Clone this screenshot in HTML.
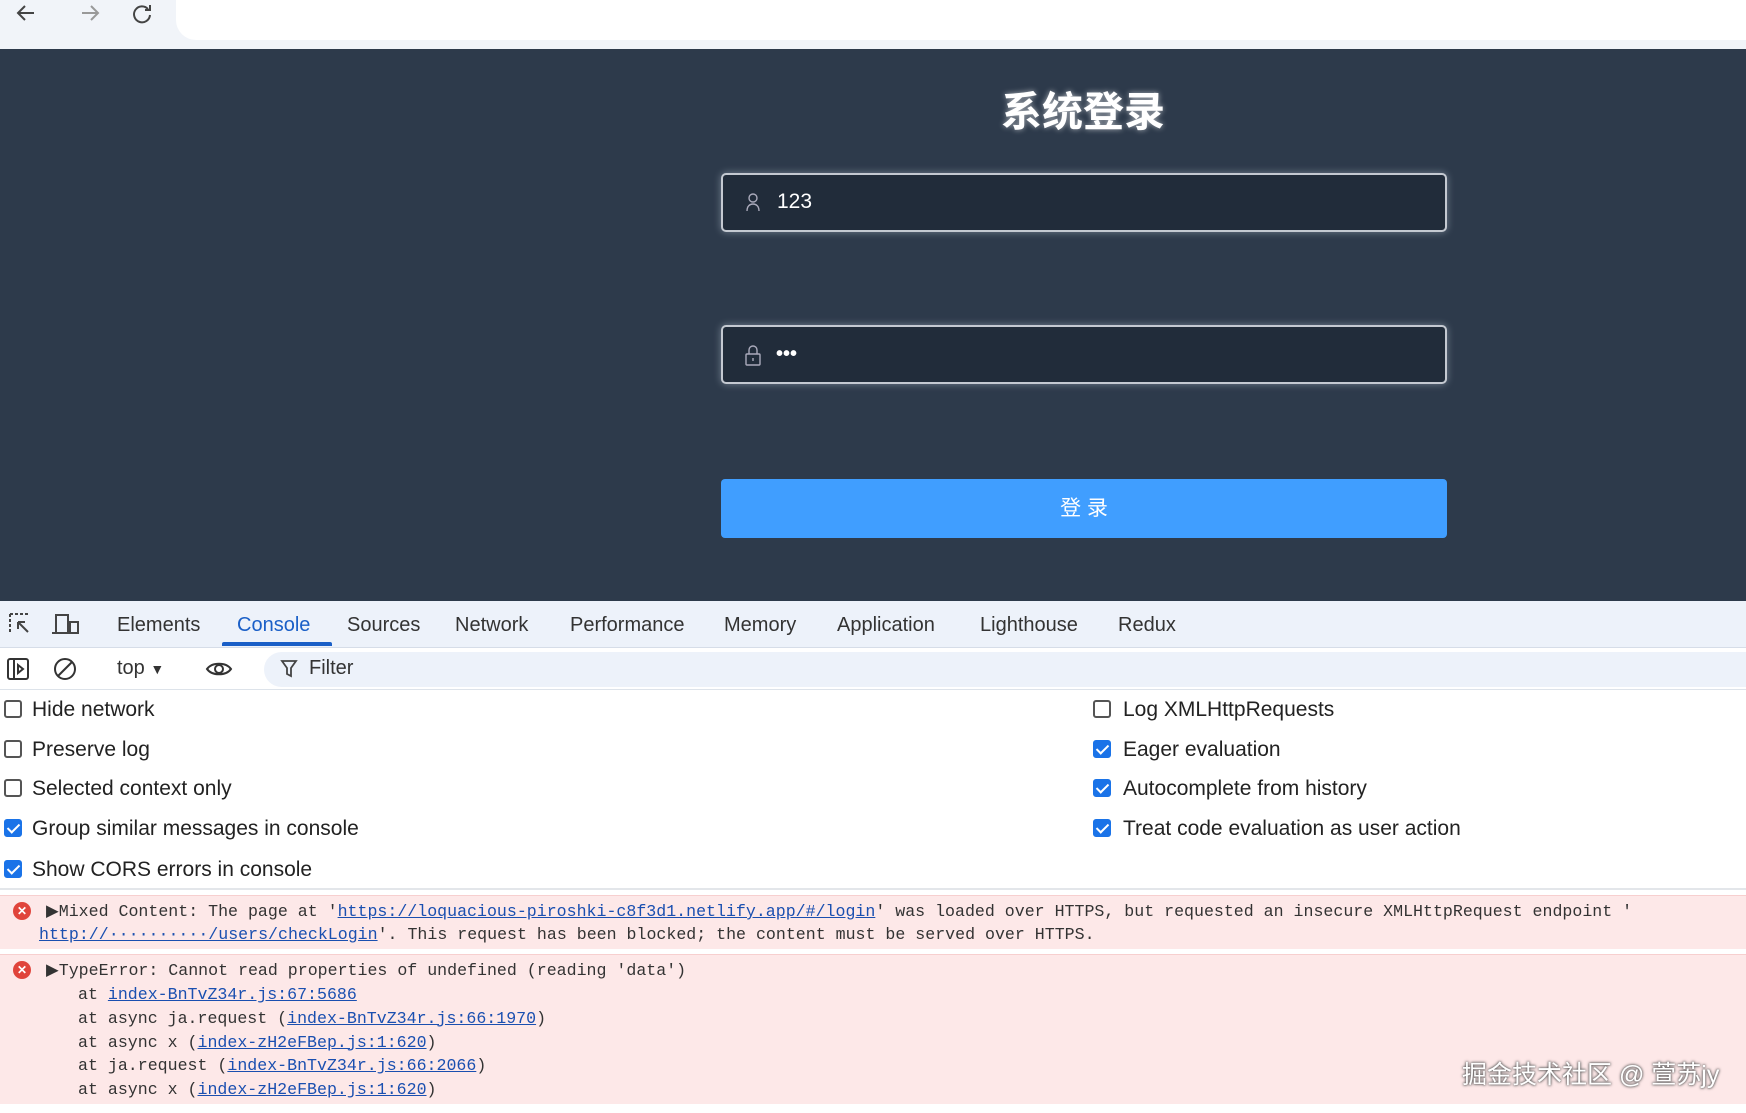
<!DOCTYPE html>
<html><head><meta charset="utf-8"><style>
*{box-sizing:border-box;margin:0;padding:0}
body{width:1746px;height:1113px;overflow:hidden;background:#fff;font-family:"Liberation Sans","Noto Sans CJK SC",sans-serif;position:relative}
.abs{position:absolute}
.top{left:0;top:0;width:1746px;height:49px;background:#f1f4f9}
.addr{left:176px;top:0;width:1570px;height:40px;background:#fff;border-radius:0 0 0 20px}
.dark{left:0;top:49px;width:1746px;height:552px;background:#2d3a4b}
.title{left:0;width:2166px;top:78px;text-align:center;color:#fff;font-size:41px;font-weight:bold;text-shadow:0 0 6px rgba(255,255,255,.6)}
.inp{left:721px;width:726px;height:59px;background:#212c3a;border:2px solid #c4c9d1;border-radius:5px;box-shadow:0 0 8px rgba(200,210,225,.45)}
.btn{left:721px;top:479px;width:726px;height:59px;background:#409eff;border-radius:4px;color:#fff;font-size:21px;text-align:center;line-height:59px}
.tabs{left:0;top:601px;width:1746px;height:47px;background:#edf2fa;border-bottom:1px solid #d6dde8}
.tab{top:614px;font-size:20px;color:#333}
.tool{left:0;top:649px;width:1746px;height:41px;background:#fff;border-bottom:1px solid #dde3ea}
.filter{left:264px;top:652px;width:1482px;height:35px;background:#edf2fa;border-radius:18px 0 0 18px}
.cb{width:18px;height:18px;border:2px solid #555;border-radius:3px}
.cb.on{background:#1a73e8;border-color:#1a73e8}
.cb.on:after{content:"";position:absolute;left:4px;top:0px;width:5px;height:10px;border:solid #fff;border-width:0 2.5px 2.5px 0;transform:rotate(45deg)}
.lbl{font-size:21px;color:#222}
.err{left:0;width:1746px;background:#fde8e8;border-top:1px solid #f7cfcf}
.mono{font-family:"Liberation Mono",monospace;font-size:16.6px;color:#333;white-space:pre}
a{color:#1a4fb0;text-decoration:underline}
.x{width:18px;height:18px;border-radius:50%;background:#e0443b;color:#fff;font-size:12px;line-height:18px;text-align:center;font-weight:bold}
</style></head><body>
<div class="abs top"></div>
<div class="abs addr"></div>
<svg class="abs" style="left:14px;top:3px" width="140" height="22" viewBox="0 0 140 22" fill="none" stroke="#444" stroke-width="2">
<path d="M20 10H4M11 3L4 10l7 7"/><path d="M68 10H84M77 3l7 7-7 7" stroke="#999"/>
<path d="M134 6a8 8 0 1 0 2 6"/><path d="M136 2v5h-5"/></svg>
<div class="abs dark"></div>
<div class="abs title">系统登录</div>
<div class="abs inp" style="top:173px"></div>
<svg class="abs" style="left:745px;top:192px" width="16" height="20" viewBox="0 0 16 20" fill="none" stroke="#aab" stroke-width="1.4"><circle cx="8" cy="6" r="4"/><path d="M2 19c0-5 3-7 6-7s6 2 6 7"/></svg>
<div class="abs" style="left:777px;top:190px;color:#fff;font-size:21px">123</div>
<div class="abs inp" style="top:325px"></div>
<svg class="abs" style="left:745px;top:345px" width="16" height="21" viewBox="0 0 16 21" fill="none" stroke="#aab" stroke-width="1.4"><rect x="1" y="9" width="14" height="11" rx="1"/><path d="M4 9V5a4 4 0 0 1 8 0v4M8 13v3"/></svg>
<div class="abs" style="left:776px;top:343px;color:#fff;font-size:20px;font-weight:bold">•••</div>
<div class="abs btn">登 录</div>

<div class="abs tabs"></div>
<svg class="abs" style="left:8px;top:612px" width="100" height="26" viewBox="0 0 100 26" fill="none" stroke="#444" stroke-width="2"><path d="M2 2h20M2 2v20" stroke-dasharray="3 2"/><path d="M10 10l10 10M10 10h7M10 10v7"/><rect x="48" y="3" width="12" height="18"/><rect x="62" y="10" width="8" height="11"/><path d="M44 21h16"/></svg>
<div class="abs tab" style="left:117px">Elements</div>
<div class="abs tab" style="left:237px;color:#1a5fc7">Console</div>
<div class="abs" style="left:222px;top:642px;width:110px;height:4px;background:#1a5fc7;border-radius:2px 2px 0 0"></div>
<div class="abs tab" style="left:347px">Sources</div>
<div class="abs tab" style="left:455px">Network</div>
<div class="abs tab" style="left:570px">Performance</div>
<div class="abs tab" style="left:724px">Memory</div>
<div class="abs tab" style="left:837px">Application</div>
<div class="abs tab" style="left:980px">Lighthouse</div>
<div class="abs tab" style="left:1118px">Redux</div>

<div class="abs tool"></div>
<div class="abs filter"></div>
<svg class="abs" style="left:6px;top:655px" width="250" height="28" viewBox="0 0 250 28" fill="none" stroke="#333" stroke-width="2"><rect x="2" y="4" width="20" height="20" rx="2"/><path d="M8 4v20M12 10l5 4-5 4z"/><circle cx="59" cy="14" r="10"/><path d="M52 21l14-14"/><path d="M201 14c5-7 19-7 24 0c-5 7-19 7-24 0z"/><circle cx="213" cy="14" r="4"/></svg>
<div class="abs" style="left:117px;top:657px;font-size:20px;color:#333">top <span style="font-size:14px">▼</span></div>
<svg class="abs" style="left:280px;top:659px" width="18" height="20" viewBox="0 0 18 20" fill="none" stroke="#444" stroke-width="1.8"><path d="M2 2h14l-5 7v8l-4-2V9z"/></svg>
<div class="abs" style="left:309px;top:657px;font-size:20px;color:#333">Filter</div>

<div class="abs cb" style="left:4px;top:700px"></div><div class="abs lbl" style="left:32px;top:698px">Hide network</div>
<div class="abs cb" style="left:4px;top:740px"></div><div class="abs lbl" style="left:32px;top:738px">Preserve log</div>
<div class="abs cb" style="left:4px;top:779px"></div><div class="abs lbl" style="left:32px;top:777px">Selected context only</div>
<div class="abs cb on" style="left:4px;top:819px"></div><div class="abs lbl" style="left:32px;top:817px">Group similar messages in console</div>
<div class="abs cb on" style="left:4px;top:860px"></div><div class="abs lbl" style="left:32px;top:858px">Show CORS errors in console</div>
<div class="abs cb" style="left:1093px;top:700px"></div><div class="abs lbl" style="left:1123px;top:698px">Log XMLHttpRequests</div>
<div class="abs cb on" style="left:1093px;top:740px"></div><div class="abs lbl" style="left:1123px;top:738px">Eager evaluation</div>
<div class="abs cb on" style="left:1093px;top:779px"></div><div class="abs lbl" style="left:1123px;top:777px">Autocomplete from history</div>
<div class="abs cb on" style="left:1093px;top:819px"></div><div class="abs lbl" style="left:1123px;top:817px">Treat code evaluation as user action</div>
<div class="abs" style="left:0;top:888px;width:1746px;height:2px;background:#e3e6ea"></div>

<div class="abs err" style="top:895px;height:54px"></div>
<div class="abs x" style="left:13px;top:902px">✕</div>
<div class="abs mono" style="left:46px;top:901px">▶Mixed Content: The page at '<a>https://loquacious-piroshki-c8f3d1.netlify.app/#/login</a>' was loaded over HTTPS, but requested an insecure XMLHttpRequest endpoint '</div>
<div class="abs mono" style="left:39px;top:925px"><a>http://··········/users/checkLogin</a>'. This request has been blocked; the content must be served over HTTPS.</div>

<div class="abs err" style="top:954px;height:150px"></div>
<div class="abs x" style="left:13px;top:961px">✕</div>
<div class="abs mono" style="left:46px;top:960px">▶TypeError: Cannot read properties of undefined (reading 'data')</div>
<div class="abs mono" style="left:78px;top:983px;line-height:23.8px">at <a>index-BnTvZ34r.js:67:5686</a>
at async ja.request (<a>index-BnTvZ34r.js:66:1970</a>)
at async x (<a>index-zH2eFBep.js:1:620</a>)
at ja.request (<a>index-BnTvZ34r.js:66:2066</a>)
at async x (<a>index-zH2eFBep.js:1:620</a>)</div>
<div class="abs" style="left:1462px;top:1055px;font-size:25px;color:#fff;text-shadow:0 0 2px #555,0 0 3px #555">掘金技术社区 @ 萱苏jy</div>
</body></html>
